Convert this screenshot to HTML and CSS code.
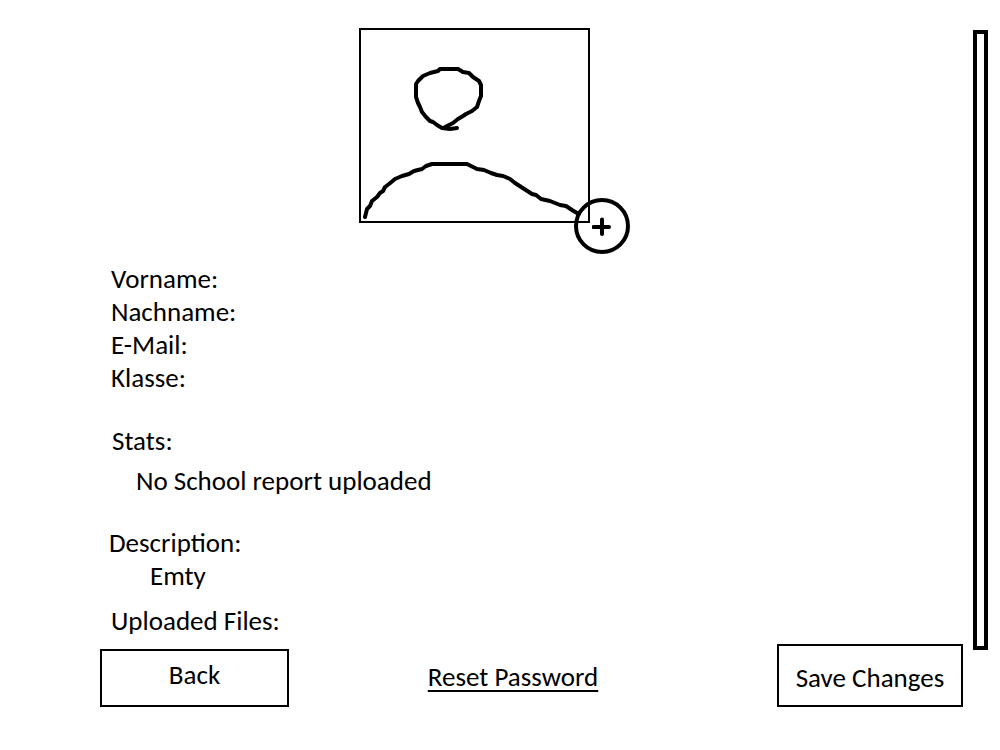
FILE: index.html
```html
<!DOCTYPE html>
<html lang="de">
<head>
<meta charset="utf-8">
<title>Profile</title>
<link rel="stylesheet" href="styles.css">
</head>
<body>
<div class="page">
  <main class="profile">
    <div class="avatar">
      <svg class="portrait" viewBox="0 0 227 191" role="img" aria-label="Profile picture">
        <path d="M96 98 L89 99 L81 98 L76 95 L72 92 L69 91 L65 87 L61 82 L59 77 L57 73 L55 67 V54 L57 51 L62 46 L69 43 L77 41 L79 39 H97 L102 42 L108 43 L112 47 L118 51 L120 55 V66 L118 71 L116 77 L111 81 L105 84 L102 86 L97 89 L92 93 L84 97"/>
        <path d="M4 187 L6 179 L9 176 L11 171 L16 167 L19 163 L22 161 L24 157 L28 154 L34 149 L41 146 L48 144 L53 141 L61 139 L65 136 L71 134 H106 L116 139 L123 140 L130 143 L136 145 L142 146 L149 149 L154 153 L171 164 L175 165 L180 169 L189 171 L199 175 L205 176 L211 180 L216 183 L218 183"/>
      </svg>
      <button class="add" type="button" aria-label="Add picture">
        <svg class="plus" viewBox="0 0 20 20" aria-hidden="true"><path d="M1.5 11H17M10 3.5V18"/></svg>
      </button>
    </div>
    <section class="details">
      <p>Vorname:</p>
      <p>Nachname:</p>
      <p>E-Mail:</p>
      <p>Klasse:</p>
    </section>
    <section class="stats">
      <p>Stats:</p>
      <p class="report">No School report uploaded</p>
    </section>
    <section class="description">
      <p>Description:</p>
      <p class="value">Emty</p>
    </section>
    <p class="files">Uploaded Files:</p>
    <footer class="actions">
      <button class="box back" type="button">Back</button>
      <a class="reset" href="#">Reset Password</a>
      <button class="box save" type="button">Save Changes</button>
    </footer>
  </main>
  <div class="scrollbar"></div>
</div>
</body>
</html>
```
FILE: styles.css
```css
* {
  box-sizing: border-box;
}

body {
  margin: 0;
  background: #fff;
  color: #000;
  font: 27px/33px Carlito, Calibri, Lato, sans-serif;
}

p {
  margin: 0;
}

.page {
  display: flex;
  gap: 10px;
  padding: 28px 12px 43px 100px;
}

.profile {
  flex: 1;
  display: flex;
  flex-direction: column;
}

.avatar {
  position: relative;
  width: 231px;
  margin-left: 30%;
  border: 2px solid #000;
}

.portrait {
  display: block;
  width: 100%;
  fill: none;
  stroke: #000;
  stroke-width: 4;
  stroke-linecap: round;
  stroke-linejoin: round;
}

.add {
  position: absolute;
  right: -42px;
  bottom: -33px;
  display: grid;
  place-items: center;
  width: 56px;
  height: 56px;
  padding: 0;
  border: 4px solid #000;
  border-radius: 50%;
  background: none;
}

.plus {
  width: 20px;
  stroke: #000;
  stroke-width: 4;
  stroke-linecap: round;
}

.details {
  margin: 39px 0 30px;
  padding-left: 11px;
}

.stats {
  padding-left: 12px;
}

.report {
  margin-top: 7px;
  padding-left: 24px;
}

.description {
  margin: 29px 0 12px;
  padding-left: 9px;
}

.value {
  padding-left: 41px;
}

.files {
  padding-left: 11px;
}

.actions {
  display: flex;
  justify-content: space-between;
  align-items: flex-end;
  margin-top: 7px;
}

.box {
  border: 2px solid #000;
  background: #fff;
  color: #000;
  font: inherit;
}

.back {
  width: 189px;
  padding: 7px 0 14px;
}

.save {
  width: 186px;
  padding: 15px 0 11px;
}

.reset {
  margin-bottom: 14px;
  margin-right: 40px;
  color: #000;
  text-underline-offset: 4px;
  text-decoration-thickness: 2px;
}

.scrollbar {
  width: 15px;
  margin: 2px 0 57px;
  border: 4px solid #000;
}
```
